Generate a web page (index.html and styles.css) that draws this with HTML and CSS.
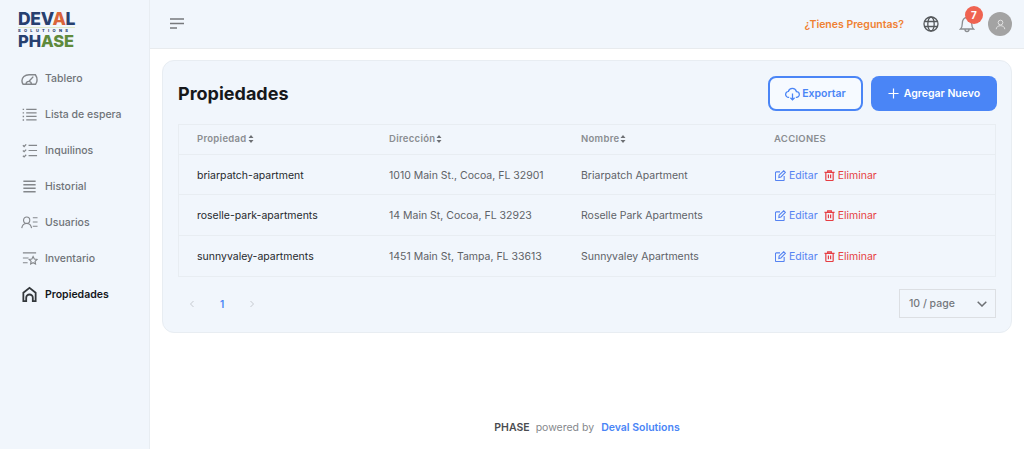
FILE: index.html
```html
<!DOCTYPE html>
<html lang="es">
<head>
<meta charset="utf-8">
<title>Propiedades</title>
<link rel="stylesheet" href="styles.css">
</head>
<body>
<div class="app">
  <aside class="sidebar">
    <div class="logo">
      <div class="logo-deval">DEV<span class="logo-a">A</span>L</div>
      <div class="logo-sol">SOLUTIONS</div>
      <div class="logo-phase">PH<span class="logo-ase">ASE</span></div>
    </div>
    <nav class="nav">
      <a class="nav-item"><svg class="nav-icon" viewBox="0 0 18 18" fill="none" stroke="currentColor" stroke-width="1.500"><path d="M2.200 15h13.300c.9-1.200 1.500-2.700 1.500-4.500 0-2.200-.7-4-1.800-5.500H8.500C4 5 1 8 1 11.500c0 1.400.4 2.600 1.200 3.500z"/><path d="M8.500 12l4.500-5M11 15c0-1.700-1.100-3-2.800-3s-2.800 1.300-2.800 3"/></svg>Tablero</a>
      <a class="nav-item"><svg class="nav-icon" viewBox="0 0 18 18" fill="none" stroke="currentColor" stroke-width="1.400"><path d="M5.500 3.500h11M5.500 7.300h11M5.500 11h11M5.500 14.700h11"/><path stroke-width="1.500" stroke-dasharray="1.500 2.250" d="M2.500 2.800v13"/></svg>Lista de espera</a>
      <a class="nav-item"><svg class="nav-icon" viewBox="0 0 18 18" fill="none" stroke="currentColor" stroke-width="1.300"><path d="M8 3.500h9M8 9h9M8 14.500h9M2 3.500l1.300 1.300L5.500 2.500M2 9l1.300 1.300L5.500 8M2 14.500l1.300 1.300 2.200-2.300"/></svg>Inquilinos</a>
      <a class="nav-item"><svg class="nav-icon" viewBox="0 0 18 18" fill="none" stroke="currentColor" stroke-width="1.600"><path d="M2.500 3.500h13M2.500 7.200h13M2.500 10.900h13M2.500 14.600h13"/></svg>Historial</a>
      <a class="nav-item"><svg class="nav-icon" viewBox="0 0 18 18" fill="none" stroke="currentColor" stroke-width="1.200"><circle cx="6" cy="6.500" r="3.300"/><path d="M.8 15c.4-3 2.500-5 5.200-5s4.800 2 5.200 5M12.500 4h5M12.500 8.500h5M12.500 13h5"/></svg>Usuarios</a>
      <a class="nav-item"><svg class="nav-icon" viewBox="0 0 18 18" fill="none" stroke="currentColor" stroke-width="1.200"><path d="M2 3h14M2 8.500h6M2 13.500h5"/><path d="M12.800 7l1.300 2.600 2.800.4-2 2 .5 2.800-2.600-1.400-2.600 1.400.5-2.800-2-2 2.800-.4z"/></svg>Inventario</a>
      <a class="nav-item active"><svg class="nav-icon" viewBox="0 0 18 18" fill="none" stroke="currentColor" stroke-width="1.900"><path d="M2.500 16V7.200L9 2l6.500 5.200V16h-3v-3.500a3.500 3.500 0 0 0-7 0V16z"/></svg>Propiedades</a>
    </nav>
  </aside>
  <div class="main">
    <header class="topbar">
      <svg class="menu-icon" viewBox="0 0 14 12" fill="none" stroke="currentColor" stroke-width="1.400"><path d="M0 1h14M0 5.500h14M0 10h7"/></svg>
      <div class="top-right">
        <a class="help">¿Tienes Preguntas?</a>
        <svg class="globe" viewBox="0 0 16 16" fill="none" stroke="currentColor" stroke-width="1.300"><circle cx="8" cy="8" r="7"/><ellipse cx="8" cy="8" rx="3.200" ry="7"/><path d="M1.500 5.500h13M1.500 10.500h13"/></svg>
        <div class="bell-wrap">
          <svg class="bell" viewBox="0 0 16 18" fill="none" stroke="currentColor" stroke-width="1.300"><path d="M1.500 14h13c-1.300-1.200-1.800-2.500-1.800-5.500C12.700 5 11 2.500 8 2.500S3.300 5 3.300 8.500c0 3-.5 4.300-1.800 5.500zM6 14.500c0 1.300.9 2 2 2s2-.7 2-2"/></svg>
          <span class="badge">7</span>
        </div>
        <div class="avatar"><svg viewBox="0 0 14 14" fill="none" stroke="currentColor" stroke-width="1.100"><circle cx="7" cy="4.500" r="3"/><path d="M1.500 13c.3-2.800 2.500-4.500 5.500-4.500s5.200 1.700 5.500 4.500"/></svg></div>
      </div>
    </header>
    <main class="content">
      <section class="card">
        <div class="card-head">
          <h1 class="title">Propiedades</h1>
          <div class="actions">
            <button class="btn btn-outline"><svg class="btn-icon" viewBox="0 0 18 16" fill="none" stroke="currentColor" stroke-width="1.500"><path d="M5 12H4.500a3.500 3.500 0 0 1-.5-7A5 5 0 0 1 13.700 5a3.500 3.500 0 0 1 0 7H13M9 7.500V15M6.500 12.500L9 15l2.500-2.500"/></svg>Exportar</button>
            <button class="btn btn-primary"><svg class="plus" viewBox="0 0 12 12" fill="none" stroke="currentColor" stroke-width="1.300"><path d="M6 .5v11M.5 6h11"/></svg>Agregar Nuevo</button>
          </div>
        </div>
        <div class="table">
          <div class="row row-head">
            <div>Propiedad<svg class="sort" viewBox="0 0 6 8" fill="currentColor"><path d="M3 0l2.500 3h-5zM3 8L.5 5h5z"/></svg></div>
            <div>Dirección<svg class="sort" viewBox="0 0 6 8" fill="currentColor"><path d="M3 0l2.500 3h-5zM3 8L.5 5h5z"/></svg></div>
            <div>Nombre<svg class="sort" viewBox="0 0 6 8" fill="currentColor"><path d="M3 0l2.500 3h-5zM3 8L.5 5h5z"/></svg></div>
            <div class="upper">ACCIONES</div>
          </div>
          <div class="row row-body">
            <div class="prop">briarpatch-apartment</div>
            <div>1010 Main St., Cocoa, FL 32901</div>
            <div>Briarpatch Apartment</div>
            <div class="ops">
              <a class="op edit"><svg viewBox="0 0 12 12" fill="none" stroke="currentColor" stroke-width="1.200"><path d="M5.500 2H1.500A1 1 0 0 0 .5 3v7.500a1 1 0 0 0 1 1H9a1 1 0 0 0 1-1V6.500"/><path d="M4.500 5.500L9.500 .8l1.800 1.800-4.800 5-2.300.5z"/></svg>Editar</a>
              <a class="op del"><svg viewBox="0 0 12 12" fill="none" stroke="currentColor" stroke-width="1.300"><path d="M.5 2.500h11M4 2.500V1h4v1.500M2 2.500v8a1 1 0 0 0 1 1h6a1 1 0 0 0 1-1v-8M4.800 5v4M7.200 5v4"/></svg>Eliminar</a>
            </div>
          </div>
          <div class="row row-body">
            <div class="prop">roselle-park-apartments</div>
            <div>14 Main St, Cocoa, FL 32923</div>
            <div>Roselle Park Apartments</div>
            <div class="ops">
              <a class="op edit"><svg viewBox="0 0 12 12" fill="none" stroke="currentColor" stroke-width="1.200"><path d="M5.500 2H1.500A1 1 0 0 0 .5 3v7.500a1 1 0 0 0 1 1H9a1 1 0 0 0 1-1V6.500"/><path d="M4.500 5.500L9.500 .8l1.800 1.800-4.800 5-2.300.5z"/></svg>Editar</a>
              <a class="op del"><svg viewBox="0 0 12 12" fill="none" stroke="currentColor" stroke-width="1.300"><path d="M.5 2.500h11M4 2.500V1h4v1.500M2 2.500v8a1 1 0 0 0 1 1h6a1 1 0 0 0 1-1v-8M4.800 5v4M7.200 5v4"/></svg>Eliminar</a>
            </div>
          </div>
          <div class="row row-body">
            <div class="prop">sunnyvaley-apartments</div>
            <div>1451 Main St, Tampa, FL 33613</div>
            <div>Sunnyvaley Apartments</div>
            <div class="ops">
              <a class="op edit"><svg viewBox="0 0 12 12" fill="none" stroke="currentColor" stroke-width="1.200"><path d="M5.500 2H1.500A1 1 0 0 0 .5 3v7.500a1 1 0 0 0 1 1H9a1 1 0 0 0 1-1V6.500"/><path d="M4.500 5.500L9.500 .8l1.800 1.800-4.800 5-2.300.5z"/></svg>Editar</a>
              <a class="op del"><svg viewBox="0 0 12 12" fill="none" stroke="currentColor" stroke-width="1.300"><path d="M.5 2.500h11M4 2.500V1h4v1.500M2 2.500v8a1 1 0 0 0 1 1h6a1 1 0 0 0 1-1v-8M4.800 5v4M7.200 5v4"/></svg>Eliminar</a>
            </div>
          </div>
        </div>
        <div class="pager">
          <div class="pages">
            <svg class="chev" viewBox="0 0 6 8" fill="none" stroke="currentColor" stroke-width="1"><path d="M4.500 1L1.500 4l3 3"/></svg>
            <span class="page-num">1</span>
            <svg class="chev" viewBox="0 0 6 8" fill="none" stroke="currentColor" stroke-width="1"><path d="M1.500 1l3 3-3 3"/></svg>
          </div>
          <div class="select">10 / page<svg class="select-chev" viewBox="0 0 10 6" fill="none" stroke="currentColor" stroke-width="1.500"><path d="M.7.700L5 5l4.300-4.300"/></svg></div>
        </div>
      </section>
    </main>
    <footer class="footer">
      <span class="f-phase">PHASE</span>
      <span class="f-by">powered by</span>
      <span class="f-deval">Deval Solutions</span>
    </footer>
  </div>
</div>
</body>
</html>
```
FILE: styles.css
```css
* { box-sizing: border-box; }
html, body { margin: 0; height: 449px; overflow: hidden; }
body { font-family: Inter, "Liberation Sans", sans-serif; background: #fff; color: #1a1a1a; }
svg { display: block; flex: none; }

.app { display: flex; height: 449px; }

.sidebar { width: 150px; flex: none; background: #f1f6fc; border-right: 1px solid #e8edf2; }
.logo { height: 60px; padding: 10px 0 0 18px; display: flex; flex-direction: column; font-family: Inter, sans-serif; font-weight: 800; }
.logo-deval { width: 57px; font-size: 17.500px; line-height: 17px; color: #27406f; letter-spacing: -.3px; border-bottom: 1px solid #dfe8c8; }
.logo-a { color: #d9643a; }
.logo-sol { font-size: 4px; line-height: 6px; letter-spacing: 3.300px; color: #27406f; white-space: nowrap; }
.logo-phase { font-size: 16.500px; line-height: 15px; color: #27406f; letter-spacing: -.1px; }
.logo-ase { color: #5f8a3c; }

.nav { display: flex; flex-direction: column; gap: 12px; padding-top: 6px; }
.nav-item { height: 24px; padding-left: 21px; display: flex; align-items: center; gap: 7px; font-size: 10.500px; font-weight: 500; color: #6f7378; }
.nav-icon { width: 17px; height: 17px; color: #84878b; }
.nav-item.active { color: #14171a; font-weight: 600; }
.nav-item.active .nav-icon { color: #33373b; }

.main { flex: 1; min-width: 0; display: flex; flex-direction: column; }
.topbar { height: 49px; flex: none; background: #f1f6fc; border-bottom: 1px solid #e8ebee; display: flex; align-items: center; justify-content: space-between; padding: 0 12px 0 20px; }
.menu-icon { width: 14px; height: 12px; color: #77797c; }
.top-right { display: flex; align-items: center; }
.help { font-size: 10.500px; font-weight: 600; color: #ef8132; }
.globe { width: 16px; height: 16px; margin-left: 19px; color: #55585b; }
.bell-wrap { position: relative; margin-left: 20px; width: 16px; height: 18px; }
.bell { width: 16px; height: 18px; color: #8a8d90; }
.badge { position: absolute; left: 6px; top: -9px; width: 18px; height: 18px; border-radius: 50%; background: #ef6351; color: #fff; font-size: 10px; font-weight: 700; display: flex; align-items: center; justify-content: center; }
.avatar { width: 24px; height: 24px; margin-left: 13px; border-radius: 50%; background: #a3a3a3; color: #e9e9e9; display: flex; align-items: center; justify-content: center; }
.avatar svg { width: 11px; height: 11px; }

.content { padding: 11px 12px 0; flex: 1; }
.card { height: 273px; background: #f1f6fc; border: 1px solid #e8edf2; border-radius: 12px; padding: 15px 15px 0; }
.card-head { height: 48px; display: flex; align-items: flex-start; justify-content: space-between; }
.title { margin: 0; font-size: 18px; line-height: 35px; font-weight: 700; color: #16181b; }
.actions { display: flex; gap: 8px; height: 35px; margin-right: -1px; }
.btn { height: 35px; border-radius: 8px; font-family: inherit; font-size: 10.500px; font-weight: 600; display: flex; align-items: center; justify-content: center; }
.btn-outline { width: 95px; background: #f6faff; border: 2px solid #4a85f6; color: #4a85f6; gap: 2px; }
.btn-icon { width: 15px; height: 14px; }
.btn-primary { width: 126px; background: #4a85f6; border: 0; color: #fff; gap: 5px; }
.plus { width: 11px; height: 11px; }

.table { border: 1px solid #e8edf2; }
.row { display: grid; grid-template-columns: 192px 192px 193px 1fr; align-items: center; padding-left: 18px; border-bottom: 1px solid #e8edf2; }
.row:last-child { border-bottom: 0; }
.row-head { height: 30px; padding-bottom: 2px; font-size: 9.500px; font-weight: 600; color: #8a8d91; letter-spacing: .3px; }
.row-head > div { display: flex; align-items: center; gap: 1px; }
.upper { font-size: 9.500px; }
.sort { width: 6px; height: 8px; color: #6d7074; }
.row-body { height: 40.400px; padding-top: 1px; font-size: 10.500px; color: #5e6267; }
.prop { color: #26292d; }
.ops { display: flex; gap: 6px; margin-left: 1px; }
.op { display: flex; align-items: center; gap: 3px; }
.op svg { width: 11px; height: 11px; }
.edit { color: #5583f2; }
.del { color: #e63e43; }

.pager { display: flex; align-items: center; justify-content: space-between; margin-top: 12px; }
.pages { display: flex; align-items: center; padding-left: 11px; }
.chev { width: 6px; height: 8px; color: #c6cad0; }
.page-num { width: 54px; text-align: center; font-size: 10px; font-weight: 600; color: #4a85f6; }
.select { width: 97px; height: 29px; border: 1px solid #dcdfe3; display: flex; align-items: center; justify-content: space-between; padding: 0 8px 0 9px; font-size: 10.500px; font-weight: 500; color: #74787d; }
.select-chev { width: 10px; height: 6px; color: #6d7074; }

.footer { height: 28px; flex: none; display: flex; justify-content: center; align-items: flex-start; gap: 6px; font-size: 10.500px; }
.f-phase { font-weight: 600; color: #4a4c50; }
.f-by { color: #85888c; }
.f-deval { font-weight: 600; color: #4a85f6; margin-left: 1px; }
```
